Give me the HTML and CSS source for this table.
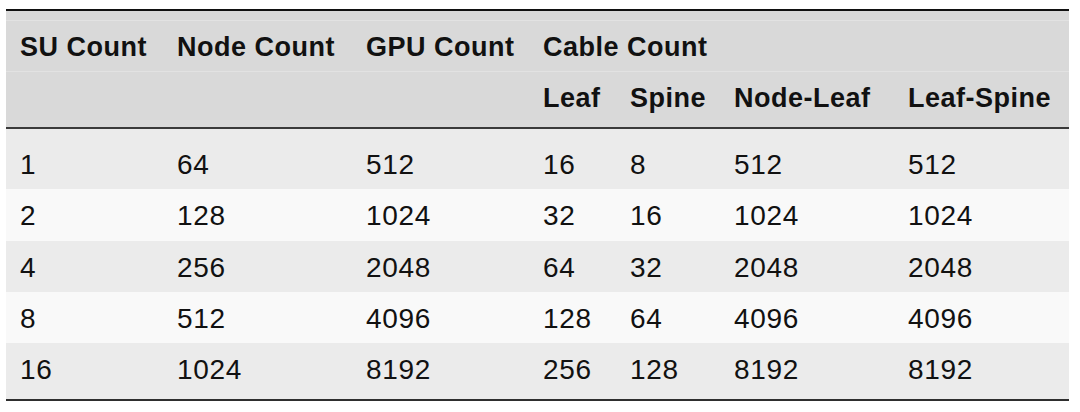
FILE: index.html
```html
<!DOCTYPE html>
<html>
<head>
<meta charset="utf-8">
<link rel="stylesheet" href="styles.css">
</head>
<body>
<div class="wrap">
<table class="grid">
  <colgroup>
    <col class="c1"><col class="c2"><col class="c3"><col class="c4"><col class="c5"><col class="c6"><col class="c7">
  </colgroup>
  <thead>
    <tr class="h1">
      <th>SU Count</th><th>Node Count</th><th>GPU Count</th><th colspan="4">Cable Count</th>
    </tr>
    <tr class="h2">
      <th></th><th></th><th></th><th>Leaf</th><th>Spine</th><th>Node-Leaf</th><th>Leaf-Spine</th>
    </tr>
  </thead>
  <tbody>
    <tr><td>1</td><td>64</td><td>512</td><td>16</td><td>8</td><td>512</td><td>512</td></tr>
    <tr><td>2</td><td>128</td><td>1024</td><td>32</td><td>16</td><td>1024</td><td>1024</td></tr>
    <tr><td>4</td><td>256</td><td>2048</td><td>64</td><td>32</td><td>2048</td><td>2048</td></tr>
    <tr><td>8</td><td>512</td><td>4096</td><td>128</td><td>64</td><td>4096</td><td>4096</td></tr>
    <tr><td>16</td><td>1024</td><td>8192</td><td>256</td><td>128</td><td>8192</td><td>8192</td></tr>
  </tbody>
</table>
</div>
</body>
</html>
```
FILE: styles.css
```css
html, body {
  margin: 0;
  padding: 0;
  background: #ffffff;
}
.wrap {
  padding: 9px 11px 0 6px;
}
.grid {
  width: 1063px;
  border-collapse: separate;
  border-spacing: 0;
  table-layout: fixed;
  font-family: "Liberation Sans", Arial, sans-serif;
  color: #111;
  border-top: 2px solid #111;
  border-bottom: 2px solid #2e2e2e;
}
.c1 { width: 157px; }
.c2 { width: 189px; }
.c3 { width: 177px; }
.c4 { width: 87px; }
.c5 { width: 104px; }
.c6 { width: 174px; }
.c7 { width: 175px; }

.grid th, .grid td {
  text-align: left;
  vertical-align: top;
  padding: 11px 0 8px 14px;
  line-height: 32px;
  white-space: nowrap;
}
.grid th {
  font-size: 27px;
  font-weight: 700;
  letter-spacing: 0.5px;
  background: #d9d9d9;
}
.grid thead .h1 th {
  padding-top: 20px;
  background: linear-gradient(#d9d9d9 9px, #e2e2e2 9px, #e2e2e2 10px, #d9d9d9 10px);
}
.grid thead .h2 th {
  padding-top: 10px;
  padding-bottom: 13px;
  border-top: 1px solid #e2e2e2;
  border-bottom: 2px solid #3a3a3a;
}
.grid td {
  font-size: 28px;
  font-weight: 400;
  letter-spacing: 0.7px;
}
.grid tbody tr:nth-child(odd) td { background: #ebebeb; }
.grid tbody tr:nth-child(even) td { background: #f9f9f9; }
.grid tbody tr:first-child td { padding-top: 20px; }
.grid tbody tr:nth-child(2) td { padding-bottom: 9px; }
.grid tbody tr:last-child td { padding-bottom: 13px; }
```
